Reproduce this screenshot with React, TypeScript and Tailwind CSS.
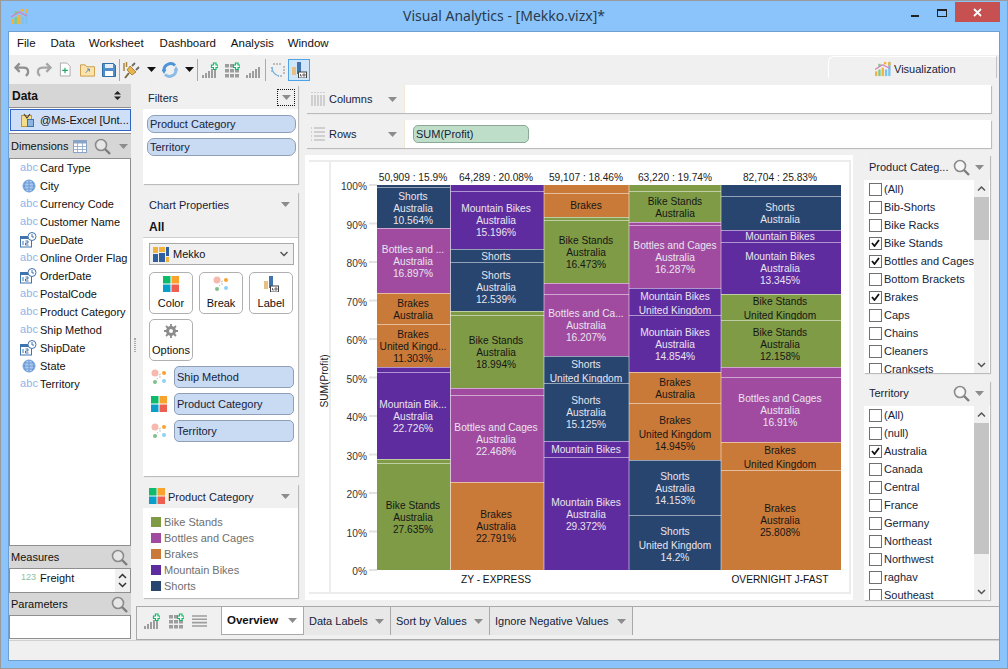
import { ReactNode } from 'react'

const ui = "font-['Liberation_Sans',sans-serif]"

type Seg = { top: number; bottom: number; color: string; lines?: string[] }
type Col = { x0: number; x1: number; cx: number; head: string; segs: Seg[] }

const BIKE = '#7f9b46'
const BOTTLE = '#a04ba0'
const BRAKE = '#ca7a38'
const MOUNT = '#5f2ca0'
const SHORT = '#27456e'

const AU = 'Australia'
const UK = 'United Kingdom'

const COLS: Col[] = [
  {
    x0: 377, x1: 450.5, cx: 413, head: '50,909 : 15.9%',
    segs: [
      { top: 185, bottom: 187, color: SHORT },
      { top: 187, bottom: 228, color: SHORT, lines: ['Shorts', AU, '10.564%'] },
      { top: 228, bottom: 293, color: BOTTLE, lines: ['Bottles and ...', AU, '16.897%'] },
      { top: 293, bottom: 324, color: BRAKE, lines: ['Brakes', AU] },
      { top: 324, bottom: 367, color: BRAKE, lines: ['Brakes', 'United Kingd...', '11.303%'] },
      { top: 367, bottom: 372, color: MOUNT },
      { top: 372, bottom: 459, color: MOUNT, lines: ['Mountain Bik...', AU, '22.726%'] },
      { top: 459, bottom: 463, color: BIKE },
      { top: 463, bottom: 570, color: BIKE, lines: ['Bike Stands', AU, '27.635%'] },
    ],
  },
  {
    x0: 450.5, x1: 544, cx: 496, head: '64,289 : 20.08%',
    segs: [
      { top: 185, bottom: 191, color: MOUNT },
      { top: 191, bottom: 249, color: MOUNT, lines: ['Mountain Bikes', AU, '15.196%'] },
      { top: 249, bottom: 262, color: SHORT, lines: ['Shorts'] },
      { top: 262, bottom: 311, color: SHORT, lines: ['Shorts', AU, '12.539%'] },
      { top: 311, bottom: 315, color: BIKE },
      { top: 315, bottom: 388, color: BIKE, lines: ['Bike Stands', AU, '18.994%'] },
      { top: 388, bottom: 395, color: BOTTLE },
      { top: 395, bottom: 482, color: BOTTLE, lines: ['Bottles and Cages', AU, '22.468%'] },
      { top: 482, bottom: 570, color: BRAKE, lines: ['Brakes', AU, '22.791%'] },
    ],
  },
  {
    x0: 544, x1: 629, cx: 586, head: '59,107 : 18.46%',
    segs: [
      { top: 185, bottom: 193, color: BRAKE },
      { top: 193, bottom: 217, color: BRAKE, lines: ['Brakes'] },
      { top: 217, bottom: 220, color: BIKE },
      { top: 220, bottom: 283, color: BIKE, lines: ['Bike Stands', AU, '16.473%'] },
      { top: 283, bottom: 294, color: BOTTLE },
      { top: 294, bottom: 356, color: BOTTLE, lines: ['Bottles and Ca...', AU, '16.207%'] },
      { top: 356, bottom: 383, color: SHORT, lines: ['Shorts', UK] },
      { top: 383, bottom: 441, color: SHORT, lines: ['Shorts', AU, '15.125%'] },
      { top: 441, bottom: 457, color: MOUNT, lines: ['Mountain Bikes'] },
      { top: 457, bottom: 570, color: MOUNT, lines: ['Mountain Bikes', AU, '29.372%'] },
    ],
  },
  {
    x0: 629, x1: 721, cx: 675, head: '63,220 : 19.74%',
    segs: [
      { top: 185, bottom: 191, color: BIKE },
      { top: 191, bottom: 222, color: BIKE, lines: ['Bike Stands', AU] },
      { top: 222, bottom: 225, color: BOTTLE },
      { top: 225, bottom: 288, color: BOTTLE, lines: ['Bottles and Cages', AU, '16.287%'] },
      { top: 288, bottom: 315, color: MOUNT, lines: ['Mountain Bikes', UK] },
      { top: 315, bottom: 372, color: MOUNT, lines: ['Mountain Bikes', AU, '14.854%'] },
      { top: 372, bottom: 403, color: BRAKE, lines: ['Brakes', AU] },
      { top: 403, bottom: 460, color: BRAKE, lines: ['Brakes', UK, '14.945%'] },
      { top: 460, bottom: 515, color: SHORT, lines: ['Shorts', AU, '14.153%'] },
      { top: 515, bottom: 570, color: SHORT, lines: ['Shorts', UK, '14.2%'] },
    ],
  },
  {
    x0: 721, x1: 841, cx: 780, head: '82,704 : 25.83%',
    segs: [
      { top: 185, bottom: 196, color: SHORT },
      { top: 196, bottom: 230, color: SHORT, lines: ['Shorts', AU] },
      { top: 230, bottom: 242, color: MOUNT, lines: ['Mountain Bikes'] },
      { top: 242, bottom: 294, color: MOUNT, lines: ['Mountain Bikes', AU, '13.345%'] },
      { top: 294, bottom: 320, color: BIKE, lines: ['Bike Stands', UK] },
      { top: 320, bottom: 367, color: BIKE, lines: ['Bike Stands', AU, '12.158%'] },
      { top: 367, bottom: 377, color: BOTTLE },
      { top: 377, bottom: 442, color: BOTTLE, lines: ['Bottles and Cages', AU, '16.91%'] },
      { top: 442, bottom: 470, color: BRAKE, lines: ['Brakes', UK] },
      { top: 470, bottom: 570, color: BRAKE, lines: ['Brakes', AU, '25.808%'] },
    ],
  },
]

const DIMENSIONS: [string, string][] = [
  ['abc', 'Card Type'],
  ['geo', 'City'],
  ['abc', 'Currency Code'],
  ['abc', 'Customer Name'],
  ['date', 'DueDate'],
  ['abc', 'Online Order Flag'],
  ['date', 'OrderDate'],
  ['abc', 'PostalCode'],
  ['abc', 'Product Category'],
  ['abc', 'Ship Method'],
  ['date', 'ShipDate'],
  ['geo', 'State'],
  ['abc', 'Territory'],
]

const CATEGORY_ITEMS: [string, boolean][] = [
  ['(All)', false],
  ['Bib-Shorts', false],
  ['Bike Racks', false],
  ['Bike Stands', true],
  ['Bottles and Cages', true],
  ['Bottom Brackets', false],
  ['Brakes', true],
  ['Caps', false],
  ['Chains', false],
  ['Cleaners', false],
  ['Cranksets', false],
]

const TERRITORY_ITEMS: [string, boolean][] = [
  ['(All)', false],
  ['(null)', false],
  ['Australia', true],
  ['Canada', false],
  ['Central', false],
  ['France', false],
  ['Germany', false],
  ['Northeast', false],
  ['Northwest', false],
  ['raghav', false],
  ['Southeast', false],
]

function Caret({ dark }: { dark?: boolean }) {
  return (
    <svg width="9" height="5" viewBox="0 0 9 5" className="shrink-0">
      <path d="M0 0h9L4.500 5z" fill={dark ? '#111' : '#8c8c8c'} />
    </svg>
  )
}

function Lens() {
  return (
    <svg width="17" height="17" viewBox="0 0 17 17" className="shrink-0">
      <circle cx="7" cy="7" r="5.500" fill="#fff" fillOpacity="0.4" stroke="#8b8b8b" strokeWidth="1.600" />
      <path d="M11 11l5 5" stroke="#7d7d7d" strokeWidth="2.400" />
    </svg>
  )
}

function ColorGrid() {
  return (
    <svg width="16" height="16" viewBox="0 0 16 16" className="shrink-0">
      <rect width="7.500" height="7.500" fill="#0dbb6b" />
      <rect x="8.500" width="7.500" height="7.500" fill="#f9a22e" />
      <rect y="8.500" width="7.500" height="7.500" fill="#0a9fca" />
      <rect x="8.500" y="8.500" width="7.500" height="7.500" fill="#ef5f4f" />
    </svg>
  )
}

function BreakIcon() {
  return (
    <svg width="16" height="16" viewBox="0 0 16 16" className="shrink-0">
      <circle cx="4" cy="4" r="3.500" fill="#f5b9ae" />
      <circle cx="13" cy="4" r="2" fill="#f9a22e" />
      <circle cx="4" cy="13" r="2" fill="#7fc08a" />
      <circle cx="13" cy="12" r="2" fill="#8fd0f5" />
      <path d="M8 6l2-1M8 8h2M7 9l-1 1" stroke="#aaa" strokeWidth="0.700" />
    </svg>
  )
}

function LabelIcon() {
  return (
    <svg width="16" height="16" viewBox="0 0 16 16" className="shrink-0">
      <rect x="1" y="5" width="4" height="8" fill="#e7c184" />
      <rect x="6" y="0" width="4" height="12" fill="#3f74ae" />
      <rect x="7.500" y="10" width="8" height="6" fill="#fff" stroke="#444" />
      <path d="M9.500 12v2h1.500M12 12h2v2h-2z" fill="none" stroke="#444" strokeWidth="0.800" />
    </svg>
  )
}

function AbcIcon() {
  return <span className="w-[17px] text-[11px] leading-none text-[#8db5ea] tracking-[0.1px] -mt-[2px]">abc</span>
}

function GlobeIcon() {
  return (
    <svg width="14" height="14" viewBox="0 0 14 14" className="shrink-0">
      <circle cx="7" cy="7" r="6" fill="#a9c8ee" stroke="#6f9fd8" />
      <path d="M1 7h12M2 4h10M2 10h10M7 1v12M4 2c-2 3-2 7 0 10M10 2c2 3 2 7 0 10" fill="none" stroke="#4f86c9" strokeWidth="0.600" />
    </svg>
  )
}

function DateIcon() {
  return (
    <svg width="17" height="16" viewBox="0 0 17 16" className="shrink-0">
      <rect x="0.500" y="4.500" width="11" height="10.500" fill="#fff" stroke="#3f74ae" />
      <rect x="0.500" y="4.500" width="11" height="2.500" fill="#3f74ae" />
      <path d="M3 9v4M5.500 9h2.500v2h-2.500v2h3" fill="none" stroke="#3f74ae" />
      <circle cx="12" cy="4.500" r="4" fill="#fff" stroke="#3f74ae" />
      <path d="M12 2v3h2" fill="none" stroke="#3f74ae" />
    </svg>
  )
}

function Logo({ size }: { size: number }) {
  return (
    <svg width={size} height={size} viewBox="0 0 17 17" className="shrink-0">
      <rect x="0" y="11" width="2.500" height="5" fill="#f3b23c" />
      <rect x="3.500" y="9" width="2.500" height="7" fill="#7fc98a" />
      <rect x="7" y="7" width="2.500" height="9" fill="#f3b23c" />
      <rect x="10.500" y="9" width="2.500" height="7" fill="#7cc4ee" />
      <rect x="14" y="1" width="2.500" height="15" fill="#7cc4ee" />
      <rect x="14" y="1" width="2.500" height="4" fill="#f3b23c" />
      <rect x="3.500" y="3" width="2.500" height="3" fill="#7fc98a" />
      <rect x="9.500" y="1" width="2.500" height="2.500" fill="#f3b23c" />
      <path d="M0 9l8-5 8 4" fill="none" stroke="#d77fb3" strokeWidth="1.300" />
    </svg>
  )
}

function BarsPlus({ gray }: { gray?: boolean }) {
  return (
    <svg width="16" height="16" viewBox="0 0 16 16" className="shrink-0">
      <g fill="#9d9d9d">
        <rect x="0" y="13" width="2" height="3" />
        <rect x="3" y="11" width="2" height="5" />
        <rect x="6" y="9" width="2" height="7" />
        <rect x="9" y="7" width="2" height="9" />
        <rect x="12" y="5" width="2" height="11" />
      </g>
      {!gray && <path d="M9.500 3h2V1h2.500v2h2v2.500h-2v2h-2.500v-2h-2z" fill="#fff" stroke="#11b968" strokeWidth="1.200" />}
    </svg>
  )
}

function GridPlus() {
  return (
    <svg width="16" height="16" viewBox="0 0 16 16" className="shrink-0">
      <g fill="#9d9d9d">
        <rect x="1" y="2" width="4" height="3.500" />
        <rect x="6" y="2" width="4" height="3.500" />
        <rect x="1" y="7" width="4" height="3.500" />
        <rect x="6" y="7" width="4" height="3.500" />
        <rect x="11" y="7" width="4" height="3.500" />
        <rect x="1" y="12" width="4" height="3.500" />
        <rect x="6" y="12" width="4" height="3.500" />
        <rect x="11" y="12" width="4" height="3.500" />
      </g>
      <path d="M9.500 3h2V1h2.500v2h2v2.500h-2v2h-2.500v-2h-2z" fill="#fff" stroke="#11b968" strokeWidth="1.200" />
    </svg>
  )
}

function Sep() {
  return <span className="mx-[3px] h-[22px] w-[1px] bg-[#a9a9a9] shrink-0" />
}

function Toolbar() {
  return (
    <div className="relative h-[29px] bg-[#f0f0f0] flex items-center pl-[5px]">
      <svg width="16" height="15" viewBox="0 0 17 15" className="shrink-0">
        <path d="M6 1L1.500 5.500 6 10M2 5.500h8c3.500 0 5 2 5 4.500 0 2-1 3.500-2.500 4" fill="none" stroke="#8f8f8f" strokeWidth="2.400" />
      </svg>
      <svg width="16" height="15" viewBox="0 0 17 15" className="shrink-0 ml-[6px]">
        <path d="M11 1l4.500 4.500L11 10M15 5.500H7C3.500 5.500 2 7.500 2 10c0 2 1 3.500 2.500 4" fill="none" stroke="#a6a6a6" strokeWidth="2.400" />
      </svg>
      <svg width="12" height="15" viewBox="0 0 13 15" className="shrink-0 ml-[7px]">
        <path d="M1.500.500h7l3.500 3.500v10.500H1.500z" fill="#fff" stroke="#a8a8a8" />
        <path d="M6.500 5.500v6M3.500 8.500h6" stroke="#17a55c" strokeWidth="1.200" />
      </svg>
      <svg width="15" height="14" viewBox="0 0 16 14" className="shrink-0 ml-[9px]">
        <path d="M.500 1.500h5l1.500 2h8.500v10H.500z" fill="#fbe3ab" stroke="#c79c4a" />
        <path d="M6 10l4-4M7.500 6H10v2.500" fill="none" stroke="#3f86c9" />
      </svg>
      <svg width="14" height="14" viewBox="0 0 14 14" className="shrink-0 ml-[7px]">
        <path d="M.500.500h11l2 2v11H.500z" fill="#4f8ec9" stroke="#2f6ea9" />
        <rect x="3" y="1" width="8" height="4" fill="#e7eef6" />
        <rect x="3" y="8" width="8" height="5" fill="#fff" />
      </svg>
      <Sep />
      <svg width="18" height="18" viewBox="0 0 18 18" className="shrink-0">
        <path d="M2 17l4-5" stroke="#7b6a3d" strokeWidth="2" />
        <path d="M4 9l5 5 4-3-6-6z" fill="#e9b44c" stroke="#8a6a2d" strokeWidth="0.700" />
        <path d="M9 5l3-3M13 9l3-3" stroke="#6a6a6a" strokeWidth="1.800" />
        <path d="M1 2v8M3.500 1v5" stroke="#a9863c" strokeWidth="1.500" />
      </svg>
      <span className="ml-[6px]"><Caret dark /></span>
      <svg width="16" height="16" viewBox="0 0 16 16" className="shrink-0 ml-[6px]">
        <path d="M13 3.500A6.500 6.500 0 0 0 2 8.500" fill="none" stroke="#4d94d6" strokeWidth="3" />
        <path d="M-0.500 7.500h5L2 12z" fill="#4d94d6" />
        <path d="M3 12.500A6.500 6.500 0 0 0 14 7.500" fill="none" stroke="#8cbce6" strokeWidth="3" />
        <path d="M11.500 8.500h5L14 4z" fill="#8cbce6" />
      </svg>
      <span className="ml-[7px]"><Caret dark /></span>
      <Sep />
      <span className="ml-[1px]"><BarsPlus /></span>
      <span className="ml-[6px]"><GridPlus /></span>
      <span className="ml-[6px]"><BarsPlus gray /></span>
      <Sep />
      <svg width="16" height="16" viewBox="0 0 16 16" className="shrink-0 ml-[1px]">
        <path d="M3 2h9M14 4v8M12 14H8M2 10V5" fill="none" stroke="#8a8a8a" strokeDasharray="2 1" />
        <path d="M2 5c0 5 3 8 7 9" fill="none" stroke="#6fb3e6" strokeWidth="1.200" />
      </svg>
      <div className="ml-[2px] w-[22px] h-[22px] border border-[#4ea3e6] bg-[#cfe6fa] flex items-center justify-center">
        <LabelIcon />
      </div>
      <div className="absolute right-[2px] bottom-[6px] w-[169px] h-[22px] pt-[3px] rounded-tl-[6px] border-t border-l border-r border-t-white border-l-white border-r-[#c4c4c4] bg-[#f0f0f0] flex items-center pl-[46px] gap-[3px] text-[11px] text-[#16233a]">
        <Logo size={16} />
        <span>Visualization</span>
      </div>
    </div>
  )
}

function LeftHeader({ children }: { children: ReactNode }) {
  return <div className="flex items-center bg-[#d6d6d6] text-[11px] text-[#111] shrink-0">{children}</div>
}

function LeftPanel() {
  return (
    <div className="w-[122px] shrink-0 flex flex-col">
      <LeftHeader>
        <div className="h-[24px] w-full flex items-center justify-between pl-[3px] pr-[10px] border-b border-[#8f8f8f] text-[12px]">
          <span className="font-bold">Data</span>
          <svg width="7" height="9" viewBox="0 0 7 9"><path d="M0 3.500L3.500 0 7 3.500zM0 5.500L3.500 9 7 5.500z" fill="#222" /></svg>
        </div>
      </LeftHeader>
      <div className="h-[26px] bg-white p-[1px] pr-0 border-b border-[#8f8f8f] shrink-0">
        <div className="h-[22px] border border-[#2f66c4] bg-[#cfdff7] flex items-center pl-[10px] gap-[6px] text-[11px] text-[#111]">
          <svg width="13" height="14" viewBox="0 0 13 14" className="shrink-0">
            <rect x="0.500" y="2.500" width="10" height="11" fill="#f5dc8a" stroke="#b9973c" />
            <path d="M3 1l3 4 3-4" fill="none" stroke="#444" strokeWidth="1.200" />
            <rect x="6.500" y="6.500" width="6" height="7" fill="#8cb4e0" stroke="#3f74ae" />
          </svg>
          <span className="whitespace-nowrap">@Ms-Excel [Unt...</span>
        </div>
      </div>
      <LeftHeader>
        <div className="h-[25px] w-full flex items-center pl-[2px] border-b border-[#8f8f8f]">
          <span>Dimensions</span>
          <svg width="14" height="13" viewBox="0 0 14 13" className="ml-[5px]">
            <rect x="0.500" y="0.500" width="13" height="12" fill="#fff" stroke="#8aa4c8" />
            <rect x="0.500" y="0.500" width="13" height="3" fill="#8aa4c8" />
            <path d="M0 6.500h14M0 9.500h14M4.500 3v10M9.500 3v10" stroke="#8aa4c8" strokeWidth="0.800" />
          </svg>
          <span className="ml-[7px]"><Lens /></span>
          <span className="ml-[8px]"><Caret /></span>
        </div>
      </LeftHeader>
      <div className="flex-1 min-h-0 bg-white border-r border-l border-[#8f8f8f] text-[11px] text-[#111]">
        {DIMENSIONS.map(([kind, label]) => (
          <div key={label} className="h-[18px] flex items-center pl-[10px] gap-[3px] whitespace-nowrap">
            <span className="w-[17px] flex justify-center shrink-0">
              {kind === 'abc' && <AbcIcon />}
              {kind === 'geo' && <GlobeIcon />}
              {kind === 'date' && <DateIcon />}
            </span>
            <span>{label}</span>
          </div>
        ))}
      </div>
      <LeftHeader>
        <div className="h-[24px] w-full flex items-center justify-between pl-[2px] pr-[3px] border-t border-b border-[#8f8f8f]">
          <span>Measures</span>
          <Lens />
        </div>
      </LeftHeader>
      <div className="h-[23px] bg-white border-l border-r border-[#8f8f8f] flex text-[11px] text-[#111] overflow-hidden shrink-0">
        <span className="ml-[11px] w-[19px] h-[18px] flex items-center text-[9px] text-[#8fbf9f]">123</span>
        <span className="h-[18px] flex items-center">Freight</span>
        <div className="ml-auto w-[15px] h-full bg-[#f0f0f0] flex flex-col items-center justify-center gap-[3px]">
          <svg width="9" height="6" viewBox="0 0 9 6"><path d="M1 5l3.500-3.500L8 5" fill="none" stroke="#333" strokeWidth="1.500" /></svg>
          <svg width="9" height="6" viewBox="0 0 9 6"><path d="M1 1l3.500 3.500L8 1" fill="none" stroke="#333" strokeWidth="1.500" /></svg>
        </div>
      </div>
      <LeftHeader>
        <div className="h-[24px] w-full flex items-center justify-between pl-[2px] pr-[3px] border-t border-b border-[#8f8f8f]">
          <span>Parameters</span>
          <Lens />
        </div>
      </LeftHeader>
      <div className="h-[23px] mb-[1px] bg-white border border-t-0 border-[#8f8f8f] shrink-0" />
    </div>
  )
}

function Panel({ className, children }: { className: string; children: ReactNode }) {
  return (
    <div className={`bg-white rounded-tl-[5px] shadow-[1px_1px_1px_#b5b5b5] overflow-hidden ${className}`}>
      {children}
    </div>
  )
}

function Pill({ className, children }: { className: string; children: ReactNode }) {
  return (
    <div className={`flex items-center border border-[#8f9fb8] bg-[#c9daf3] text-[11px] text-[#16233a] whitespace-nowrap ${className}`}>
      {children}
    </div>
  )
}

function PropButton({ label, icon }: { label: string; icon: ReactNode }) {
  return (
    <div className="w-[44px] h-[42px] rounded-[5px] border border-[#b0b0b0] bg-white flex flex-col items-center pt-[3px] gap-[3px] text-[11px] text-[#111]">
      {icon}
      <span className="leading-[16px]">{label}</span>
    </div>
  )
}

function PropsColumn() {
  return (
    <div className="w-[155px] shrink-0 flex flex-col gap-[8px] text-[11px] text-[#16233a]">
      <Panel className="h-[99px]">
        <div className="h-[24px] bg-[#f0f0f0] flex items-center justify-between pl-[5px] pr-[3px]">
          <span className="pt-[2px]">Filters</span>
          <span className="w-[18px] h-[17px] border border-dotted border-[#111] flex items-center justify-center"><Caret /></span>
        </div>
        <div className="pt-[6px] pl-[4px] pr-[2px] flex flex-col gap-[5px]">
          <Pill className="h-[18px] rounded-[7px] pl-[2px]">Product Category</Pill>
          <Pill className="h-[18px] rounded-[7px] pl-[2px]">Territory</Pill>
        </div>
      </Panel>
      <Panel className="h-[284px]">
        <div className="h-[25px] bg-[#f0f0f0] flex items-center justify-between pl-[6px] pr-[8px]">
          <span className="pt-[1px]">Chart Properties</span>
          <Caret />
        </div>
        <div className="h-[21px] bg-[#f0f0f0] border-b border-[#cfcfcf] flex items-center pl-[6px] font-bold text-[12px] text-[#111]">All</div>
        <div className="mt-[5px] mx-[6px] h-[22px] w-[145px] bg-[#f0f0f0] border border-[#a8a8a8] flex items-center pl-[3px] gap-[4px] text-[#111]">
          <svg width="16" height="15" viewBox="0 0 16 15" className="shrink-0">
            <rect width="5" height="6" fill="#f3b23c" />
            <rect x="6" width="6" height="5" fill="#f3b23c" />
            <rect x="13" width="3" height="9" fill="#2f5f9f" />
            <rect y="7" width="5" height="8" fill="#2f5f9f" />
            <rect x="6" y="6" width="6" height="9" fill="#2f5f9f" />
            <rect x="13" y="10" width="3" height="5" fill="#f3b23c" />
          </svg>
          <span>Mekko</span>
          <svg width="8" height="6" viewBox="0 0 8 6" className="ml-auto mr-[5px]"><path d="M.500 1l3.500 3.500L7.500 1" fill="none" stroke="#555" strokeWidth="1.500" /></svg>
        </div>
        <div className="mt-[7px] ml-[6px] flex flex-wrap gap-x-[6px] gap-y-[5px]">
          <PropButton label="Color" icon={<ColorGrid />} />
          <PropButton label="Break" icon={<BreakIcon />} />
          <PropButton label="Label" icon={<LabelIcon />} />
          <PropButton
            label="Options"
            icon={
              <svg width="14" height="16" viewBox="0 0 14 14" className="shrink-0">
                <circle cx="7" cy="7" r="3.500" fill="none" stroke="#8c8c8c" strokeWidth="3" />
                <path d="M7 0v3M7 11v3M0 7h3M11 7h3M2 2l2 2M10 10l2 2M12 2l-2 2M4 10l-2 2" stroke="#8c8c8c" strokeWidth="1.800" />
              </svg>
            }
          />
        </div>
        <div className="mt-[5px] ml-[8px] flex flex-col gap-[5px]">
          {[
            ['Ship Method', <BreakIcon key="a" />],
            ['Product Category', <ColorGrid key="b" />],
            ['Territory', <BreakIcon key="c" />],
          ].map(([label, icon]) => (
            <div key={label as string} className="flex items-center gap-[7px]">
              {icon}
              <Pill className="h-[22px] w-[120px] rounded-[5px] pl-[2px]">{label}</Pill>
            </div>
          ))}
        </div>
      </Panel>
      <Panel className="h-[114px]">
        <div className="h-[24px] bg-[#f0f0f0] flex items-center pl-[6px] pr-[8px] gap-[3px]">
          <ColorGrid />
          <span className="pt-[2px]">Product Category</span>
          <span className="ml-auto"><Caret /></span>
        </div>
        <div className="pt-[6px] pl-[8px] text-[#6f6f6f]">
          {[
            ['Bike Stands', 'bg-[#7f9b46]'],
            ['Bottles and Cages', 'bg-[#a04ba0]'],
            ['Brakes', 'bg-[#ca7a38]'],
            ['Mountain Bikes', 'bg-[#5f2ca0]'],
            ['Shorts', 'bg-[#27456e]'],
          ].map(([label, swatch]) => (
            <div key={label} className="h-[16px] flex items-center gap-[3px]">
              <span className={`w-[10px] h-[10px] ${swatch}`} />
              <span>{label}</span>
            </div>
          ))}
        </div>
      </Panel>
    </div>
  )
}

function ShelfBar({ label, dotted, children }: { label: string; dotted?: boolean; children?: ReactNode }) {
  return (
    <div className="h-[28px] bg-white rounded-tl-[5px] shadow-[1px_1px_1px_#b5b5b5] flex overflow-hidden">
      <div className="w-[99px] h-full bg-[#f0f0f0] border-r border-[#efe9d6] flex items-center pl-[5px] text-[11px] text-[#16233a]">
        <svg width="14" height="14" viewBox="0 0 14 14" className="shrink-0">
          {dotted ? (
            <path d="M1 0v1M4 0v1M7 0v1M10 0v1M13 0v1M1 3v11M4 3v11M7 3v11M10 3v11M13 3v11" stroke="#c4c4c4" strokeWidth="1.500" />
          ) : (
            <path d="M0 1h1M0 5h1M0 9h1M0 13h1M3 1h11M3 5h11M3 9h11M3 13h11" stroke="#c4c4c4" strokeWidth="1.500" />
          )}
        </svg>
        <span className="ml-[4px]">{label}</span>
        <span className="ml-auto mr-[7px]"><Caret /></span>
      </div>
      {children}
    </div>
  )
}

function MekkoChart() {
  const ticks = [100, 90, 80, 70, 60, 50, 40, 30, 20, 10, 0]
  const chartFont = { fontFamily: "'Liberation Sans', sans-serif", fontSize: 10.2 }
  return (
    <div className="w-[548px] h-[445px] bg-white shrink-0">
      <svg width="548" height="445" viewBox="305 155 548 445" style={chartFont}>
        <path d="M309 161H850V593H309" fill="none" stroke="#ececec" strokeWidth="2" />
        <path d="M330 161V593" stroke="#ececec" strokeWidth="2" />
        {ticks.map((t, i) => {
          const y = 185 + i * 38.5
          return (
            <g key={t}>
              <path d={`M369 ${y}H377`} stroke="#e2e2e2" strokeWidth="2" />
              <text x="367" y={y + 5} textAnchor="end" fill="#333">{t}%</text>
            </g>
          )
        })}
        <text transform="translate(328 381) rotate(-90)" textAnchor="middle" fill="#222">SUM(Profit)</text>
        {COLS.map((col) => (
          <g key={col.x0}>
            <text x={col.cx} y="181" textAnchor="middle" fill="#222">{col.head}</text>
            {col.segs.map((seg) => {
              const dark = seg.color === BIKE || seg.color === BRAKE
              const lines = seg.lines ?? []
              const offsets: number[] = []
              let run = 0
              lines.forEach((line, i) => {
                if (i > 0) run += line === UK ? 14 : 12
                offsets.push(run)
              })
              const hasUk = lines.includes(UK)
              const start = (seg.top + seg.bottom) / 2 - run / 2 + (hasUk ? 1 : 0)
              return (
                <g key={seg.top}>
                  <rect x={col.x0} y={seg.top} width={col.x1 - col.x0} height={seg.bottom - seg.top} fill={seg.color} />
                  {seg.top > 185 && <path d={`M${col.x0} ${seg.top + 0.5}H${col.x1}`} stroke="#fff" strokeOpacity="0.5" />}
                  {lines.map((line, i) => (
                    <text
                      key={i}
                      x={col.cx}
                      y={start + offsets[i] + 4}
                      textAnchor="middle"
                      fill={dark ? '#161616' : '#e9e4ef'}
                    >
                      {line}
                    </text>
                  ))}
                </g>
              )
            })}
            {col.x0 > 377 && <path d={`M${col.x0} 185V570`} stroke="#fff" strokeOpacity="0.5" />}
          </g>
        ))}
        <text x="496" y="583" textAnchor="middle" fill="#111">ZY - EXPRESS</text>
        <text x="780" y="583" textAnchor="middle" fill="#111">OVERNIGHT J-FAST</text>
      </svg>
    </div>
  )
}

function CheckPanel({ title, items, thumbH, height }: { title: string; items: [string, boolean][]; thumbH: string; height: string }) {
  return (
    <Panel className={`${height} flex flex-col`}>
      <div className="h-[25px] shrink-0 bg-[#f0f0f0] flex items-center pl-[5px] pr-[6px] text-[11px] text-[#16233a] whitespace-nowrap">
        <span>{title}</span>
        <span className="ml-auto mr-[5px]"><Lens /></span>
        <Caret />
      </div>
      <div className="flex flex-1 min-h-0">
        <div className="flex-1 min-w-0 overflow-hidden pl-[5px] text-[11px] text-[#16233a]">
          {items.map(([label, on]) => (
            <div key={label} className="h-[18px] flex items-center gap-[2px] whitespace-nowrap">
              <span className="w-[13px] h-[13px] border border-[#707070] bg-white flex items-center justify-center shrink-0">
                {on && (
                  <svg width="9" height="8" viewBox="0 0 9 8"><path d="M1 4l2.500 3L8 1" fill="none" stroke="#111" strokeWidth="1.800" /></svg>
                )}
              </span>
              <span>{label}</span>
            </div>
          ))}
        </div>
        <div className="w-[15px] mr-[1px] bg-[#f0f0f0] flex flex-col items-center shrink-0">
          <svg width="9" height="17" viewBox="0 0 9 17" className="shrink-0"><path d="M1 10.500L4.500 7 8 10.500" fill="none" stroke="#555" strokeWidth="1.500" /></svg>
          <div className={`w-full ${thumbH} bg-[#c4c4c4]`} />
          <svg width="9" height="16" viewBox="0 0 9 16" className="mt-auto shrink-0"><path d="M1 6l3.500 3.500L8 6" fill="none" stroke="#555" strokeWidth="1.500" /></svg>
        </div>
      </div>
    </Panel>
  )
}

function Tab({ label, active, className }: { label: string; active?: boolean; className: string }) {
  return (
    <div
      className={`h-[28px] flex items-center justify-between pl-[5px] pr-[6px] whitespace-nowrap ${className} ${
        active ? 'bg-white border-l border-r border-b border-[#a9a9a9] font-bold text-[11.5px] text-[#111]' : 'bg-[#e8e8e8] border-r border-[#a9a9a9] text-[11px] text-[#16233a]'
      }`}
    >
      <span>{label}</span>
      <Caret />
    </div>
  )
}

function TabStrip() {
  return (
    <div className="h-[34px] ml-[5px] shrink-0 border-t border-b border-l border-[#a9a9a9] flex items-start">
      <div className="w-[84px] h-[28px] flex items-center pl-[7px] gap-[8px]">
        <BarsPlus />
        <GridPlus />
        <svg width="15" height="12" viewBox="0 0 15 12" className="shrink-0">
          <path d="M0 1h15M0 4.300h15M0 7.600h15M0 11h15" stroke="#9d9d9d" strokeWidth="1.600" />
        </svg>
      </div>
      <Tab label="Overview" active className="w-[83px]" />
      <Tab label="Data Labels" className="w-[87px]" />
      <Tab label="Sort by Values" className="w-[99px]" />
      <Tab label="Ignore Negative Values" className="w-[143px]" />
    </div>
  )
}

function App() {
  return (
    <div className={`${ui} w-[1008px] h-[669px] bg-[#8ac4fb] border border-[#9a9a9a] flex flex-col overflow-hidden`}>
      <div className="relative h-[30px] shrink-0 flex items-center justify-center pb-[1px]">
        <span className="absolute left-[10px] top-[7px]"><Logo size={17} /></span>
        <span className="font-['Noto_Sans',sans-serif] text-[14px] text-[#2a3a4c]">Visual Analytics - [Mekko.vizx]*</span>
        <div className="absolute right-[7px] top-[1px] flex items-start">
          <span className="w-[8px] h-[2px] mt-[13px] bg-[#222]" />
          <span className="w-[10px] h-[8px] mt-[7px] ml-[18px] border border-t-2 border-[#222]" />
          <div className="w-[45px] h-[20px] ml-[8px] bg-[#c75050] flex items-center justify-center">
            <svg width="9" height="9" viewBox="0 0 9 9"><path d="M1 1l7 7M8 1L1 8" stroke="#fff" strokeWidth="1.800" /></svg>
          </div>
        </div>
      </div>
      <div className="mx-[7px] flex-1 min-h-0 bg-[#f0f0f0] border border-[#6f9fd0] flex flex-col">
        <div className="h-[23px] shrink-0 bg-white flex items-center text-[11.5px] text-[#111]">
          <span className="ml-[8px]">File</span>
          <span className="ml-[15px]">Data</span>
          <span className="ml-[14px]">Worksheet</span>
          <span className="ml-[16px]">Dashboard</span>
          <span className="ml-[15px]">Analysis</span>
          <span className="ml-[14px]">Window</span>
        </div>
        <Toolbar />
        <div className="flex flex-1 min-h-0">
          <LeftPanel />
          <div className="flex-1 min-w-0 flex flex-col">
            <div className="flex-1 min-h-0 flex">
              <div className="w-[12px] shrink-0 flex items-center pl-[3px]">
                <span className="w-[2px] h-[14px] border-x border-dotted border-[#a9a9a9]" />
              </div>
              <div className="pt-[1px] flex">
                <PropsColumn />
                <div className="ml-[8px] w-[686px] flex flex-col gap-[7px]">
                  <div className="pr-[1px]"><ShelfBar label="Columns" dotted /></div>
                  <div className="pr-[1px]">
                    <ShelfBar label="Rows">
                      <div className="ml-[8px] mt-[5px] w-[116px] h-[18px] rounded-[5px] border border-[#8aa896] bg-[#bfdeca] pl-[2px] text-[11px] leading-[16px] text-[#16233a]">SUM(Profit)</div>
                    </ShelfBar>
                  </div>
                  <div className="flex -ml-[1px]">
                    <MekkoChart />
                    <div className="ml-[11px] w-[126px] flex flex-col gap-[8px]">
                      <CheckPanel title="Product Categ..." items={CATEGORY_ITEMS} thumbH="h-[43px]" height="h-[218px]" />
                      <CheckPanel title="Territory" items={TERRITORY_ITEMS} thumbH="h-[131px]" height="h-[219px]" />
                    </div>
                  </div>
                </div>
              </div>
            </div>
            <TabStrip />
          </div>
        </div>
        <div className="h-[20px] shrink-0 bg-[#f0f0f0] border-t border-[#d0d0d0]" />
      </div>
      <div className="h-[7px] shrink-0" />
    </div>
  )
}

export default App
